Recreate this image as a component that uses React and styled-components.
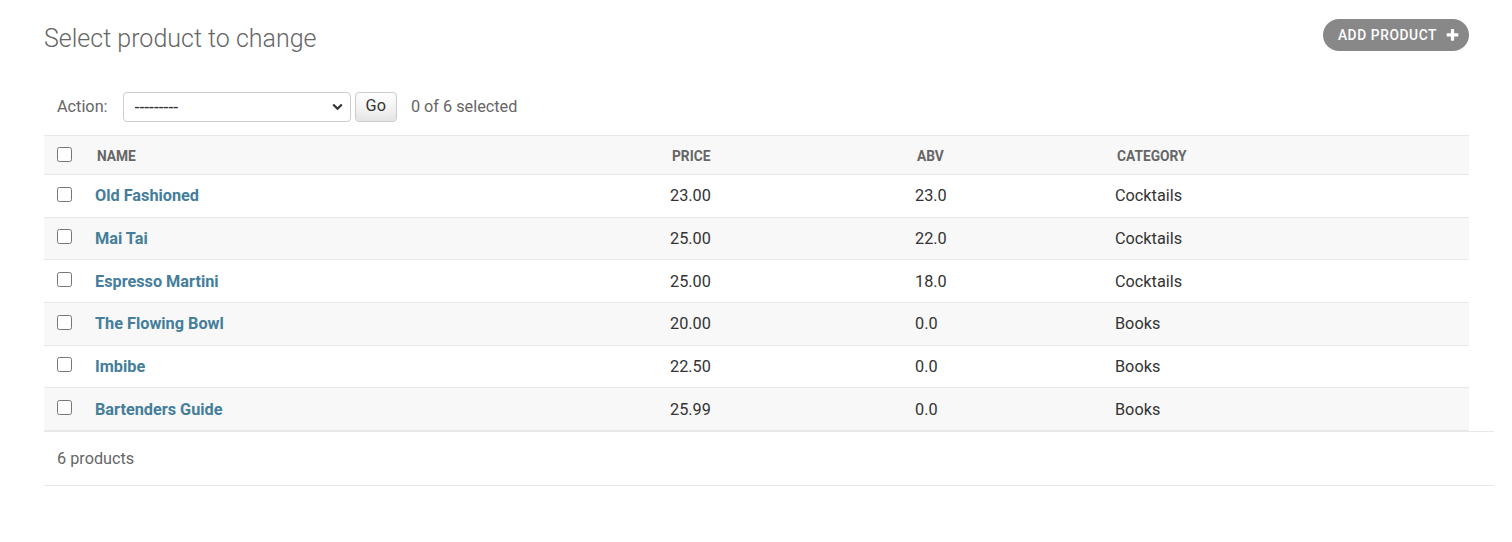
import React from "react";
import styled, { createGlobalStyle } from "styled-components";

const GlobalStyle = createGlobalStyle`
  body {
    margin: 0;
    background: #fff;
    color: #333;
    font-family: Roboto, "Liberation Sans", Arial, sans-serif;
  }
`;

const Content = styled.main`
  padding: 19px 18px 40px 44px;
`;

const Header = styled.div`
  display: flex;
  justify-content: space-between;
  align-items: flex-start;
  margin-right: 25px;
`;

const Title = styled.h1`
  margin: 5px 0 0;
  font-size: 25px;
  font-weight: 300;
  line-height: 30px;
  color: #666;
`;

const AddLink = styled.a`
  display: inline-flex;
  align-items: center;
  gap: 8px;
  height: 32px;
  padding: 0 9px 0 15px;
  border-radius: 16px;
  background: #888;
  color: #fff;
  font-size: 13.75px;
  font-weight: 500;
  letter-spacing: 0.6px;
  text-transform: uppercase;
  text-decoration: none;
  box-sizing: border-box;
`;

const Actions = styled.div`
  display: flex;
  align-items: center;
  margin: 25px 25px 0 0;
  padding: 12.5px 13px 13.5px;
  line-height: 30px;
  font-size: 16.25px;
  color: #666;
`;

const SelectWrap = styled.span`
  position: relative;
  display: inline-flex;
  margin-left: 15px;
`;

const ActionSelect = styled.select`
  appearance: none;
  width: 228px;
  height: 30px;
  padding: 0 0 0 11px;
  border: 1px solid #ccc;
  border-radius: 4px;
  background: #fff;
  color: #333;
  font-family: inherit;
  font-size: 17.5px;
`;

const Chevron = styled.svg`
  position: absolute;
  top: 11px;
  right: 8px;
  pointer-events: none;
`;

const GoButton = styled.button`
  height: 30px;
  margin-left: 4px;
  padding: 0 10px;
  border: 1px solid #ccc;
  border-radius: 4px;
  background: #fff;
  box-shadow: 0 -18.75px 25px -12.5px rgba(0, 0, 0, 0.15) inset;
  color: #333;
  font-family: inherit;
  font-size: 16.25px;
  line-height: 1;
`;

const Counter = styled.span`
  margin-left: 14px;
`;

const Table = styled.table`
  width: calc(100% - 25px);
  table-layout: fixed;
  border-collapse: separate;
  border-spacing: 0;
  font-size: 16.25px;
`;

const HeadCell = styled.th`
  box-sizing: border-box;
  height: 40px;
  padding: 1px 12.5px 0 ${(p) => (p.$check ? "13px" : "14.5px")};
  border-top: 1px solid #e8e8e8;
  border-bottom: 1px solid #e8e8e8;
  background: #f8f8f8;
  color: #666;
  font-size: 13.75px;
  font-weight: 700;
  text-align: left;
  text-transform: uppercase;
  vertical-align: middle;
`;

const Row = styled.tr`
  background: ${(p) => (p.$odd ? "#f8f8f8" : "#fff")};
`;

const Cell = styled.td`
  box-sizing: border-box;
  height: 42.65px;
  padding: 0 12.5px 0 ${(p) => (p.$check ? "13px" : "12.5px")};
  border-bottom: 1px solid #e8e8e8;
  color: #333;
  vertical-align: middle;
  white-space: nowrap;
`;

const NameLink = styled.a`
  color: #447e9b;
  font-weight: 700;
  text-decoration: none;
`;

const Check = styled.input.attrs({ type: "checkbox" })`
  display: block;
  width: 15px;
  height: 15px;
  margin: -3px 0 0;
`;

const Paginator = styled.p`
  margin: 0;
  padding: 13.5px 13px 12.5px;
  border-top: 1px solid #e8e8e8;
  border-bottom: 1px solid #e8e8e8;
  line-height: 27.5px;
  font-size: 16.25px;
  color: #666;
`;

const PlusIcon = () => (
  <svg width="15" height="15" viewBox="0 0 1792 1792" aria-hidden="true">
    <path
      fill="#fff"
      d="M1600 736v192q0 40-28 68t-68 28h-416v416q0 40-28 68t-68 28h-192q-40 0-68-28t-28-68v-416h-416q-40 0-68-28t-28-68v-192q0-40 28-68t68-28h416v-416q0-40 28-68t68-28h192q40 0 68 28t28 68v416h416q40 0 68 28t28 68z"
    />
  </svg>
);

const products = [
  { name: "Old Fashioned", price: "23.00", abv: "23.0", category: "Cocktails" },
  { name: "Mai Tai", price: "25.00", abv: "22.0", category: "Cocktails" },
  { name: "Espresso Martini", price: "25.00", abv: "18.0", category: "Cocktails" },
  { name: "The Flowing Bowl", price: "20.00", abv: "0.0", category: "Books" },
  { name: "Imbibe", price: "22.50", abv: "0.0", category: "Books" },
  { name: "Bartenders Guide", price: "25.99", abv: "0.0", category: "Books" },
];

export default function App() {
  return (
    <>
      <GlobalStyle />
      <Content>
        <Header>
          <Title>Select product to change</Title>
          <AddLink href="#">
            Add product
            <PlusIcon />
          </AddLink>
        </Header>

        <Actions>
          <label>Action:</label>
          <SelectWrap>
            <ActionSelect defaultValue="">
              <option value="">---------</option>
              <option value="delete">Delete selected products</option>
            </ActionSelect>
            <Chevron width="11" height="8" viewBox="0 0 11 8" aria-hidden="true">
              <path
                d="M1.2 1.5 5.5 5.8 9.8 1.5"
                fill="none"
                stroke="#333"
                strokeWidth="2.2"
              />
            </Chevron>
          </SelectWrap>
          <GoButton type="button">Go</GoButton>
          <Counter>0 of 6 selected</Counter>
        </Actions>

        <Table>
          <colgroup>
            <col style={{ width: 38.5 }} />
            <col style={{ width: 575 }} />
            <col style={{ width: 245 }} />
            <col style={{ width: 200 }} />
            <col />
          </colgroup>
          <thead>
            <tr>
              <HeadCell $check>
                <Check />
              </HeadCell>
              <HeadCell>Name</HeadCell>
              <HeadCell>Price</HeadCell>
              <HeadCell>Abv</HeadCell>
              <HeadCell>Category</HeadCell>
            </tr>
          </thead>
          <tbody>
            {products.map((p, i) => (
              <Row key={p.name} $odd={i % 2 === 1}>
                <Cell $check>
                  <Check />
                </Cell>
                <Cell>
                  <NameLink href="#">{p.name}</NameLink>
                </Cell>
                <Cell>{p.price}</Cell>
                <Cell>{p.abv}</Cell>
                <Cell>{p.category}</Cell>
              </Row>
            ))}
          </tbody>
        </Table>

        <Paginator>6 products</Paginator>
      </Content>
    </>
  );
}
